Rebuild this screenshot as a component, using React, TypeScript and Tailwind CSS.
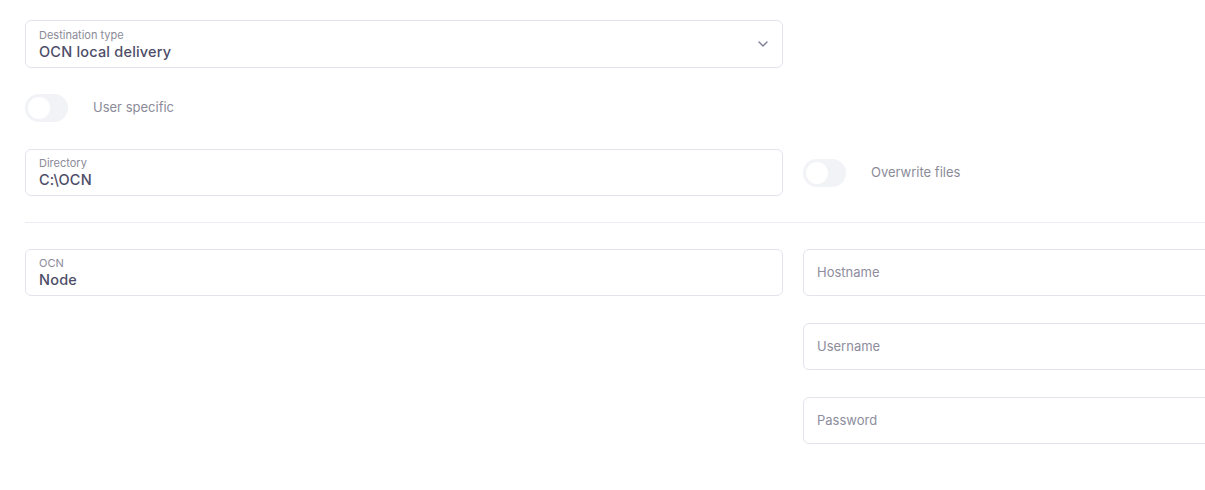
import React from 'react';
import { ChevronDown } from 'lucide-react';

const font = { fontFamily: 'Inter, "Noto Sans", sans-serif' };

const LabeledField: React.FC<{ label: string; value: string; select?: boolean }> = ({ label, value, select }) => (
  <div
    className={`${select ? 'h-[48px]' : 'h-[47px]'} border border-[#e3e3ee] rounded-md bg-white pl-[13px] pr-[11px] flex items-center`}
  >
    <div className="flex-1 min-w-0 flex flex-col pt-[1px]">
      <span className="text-[11px] leading-[13px] text-[#8b8b99]">{label}</span>
      <span className="text-[14.5px] leading-[19px] font-medium text-[#4d4d68] tracking-[0.2px]">{value}</span>
    </div>
    {select && <ChevronDown className="w-4 h-4 text-[#7c7c96]" strokeWidth={2} />}
  </div>
);

const PlainField: React.FC<{ placeholder: string }> = ({ placeholder }) => (
  <div className="h-[47px] border border-[#e3e3ee] rounded-md bg-white pl-[13px] flex items-center">
    <span className="text-[13px] text-[#8d8d9d]">{placeholder}</span>
  </div>
);

const Toggle: React.FC<{ label: string }> = ({ label }) => (
  <div className="flex items-center h-[28px]">
    <div className="w-[43px] h-[28px] rounded-full bg-[#f1f3f6] p-[3px] flex items-center shrink-0">
      <div className="w-[22px] h-[22px] rounded-full bg-white" />
    </div>
    <span className="ml-[25px] text-[13px] text-[#8b8b99]">{label}</span>
  </div>
);

export default function App() {
  return (
    <div className="w-full h-[490px] overflow-hidden bg-white" style={font}>
      <div className="w-[1561px] pl-[25px] pt-[20px]">
        <div className="grid grid-cols-[758px_758px] gap-x-[20px]">
          {/* Row 1 */}
          <LabeledField label="Destination type" value="OCN local delivery" select />
          <div />

          {/* Row 2 */}
          <div className="mt-[26px]">
            <Toggle label="User specific" />
          </div>
          <div />

          {/* Row 3 */}
          <div className="mt-[27px]">
            <LabeledField label="Directory" value="C:\OCN" />
          </div>
          <div className="mt-[27px] flex items-center">
            <Toggle label="Overwrite files" />
          </div>
        </div>

        {/* Divider */}
        <div className="mt-[26px] border-t border-[#ececf2]" />

        <div className="grid grid-cols-[758px_758px] gap-x-[20px] mt-[26px]">
          <div>
            <LabeledField label="OCN" value="Node" />
          </div>
          <div className="flex flex-col gap-[27px]">
            <PlainField placeholder="Hostname" />
            <PlainField placeholder="Username" />
            <PlainField placeholder="Password" />
          </div>
        </div>
      </div>
    </div>
  );
}
